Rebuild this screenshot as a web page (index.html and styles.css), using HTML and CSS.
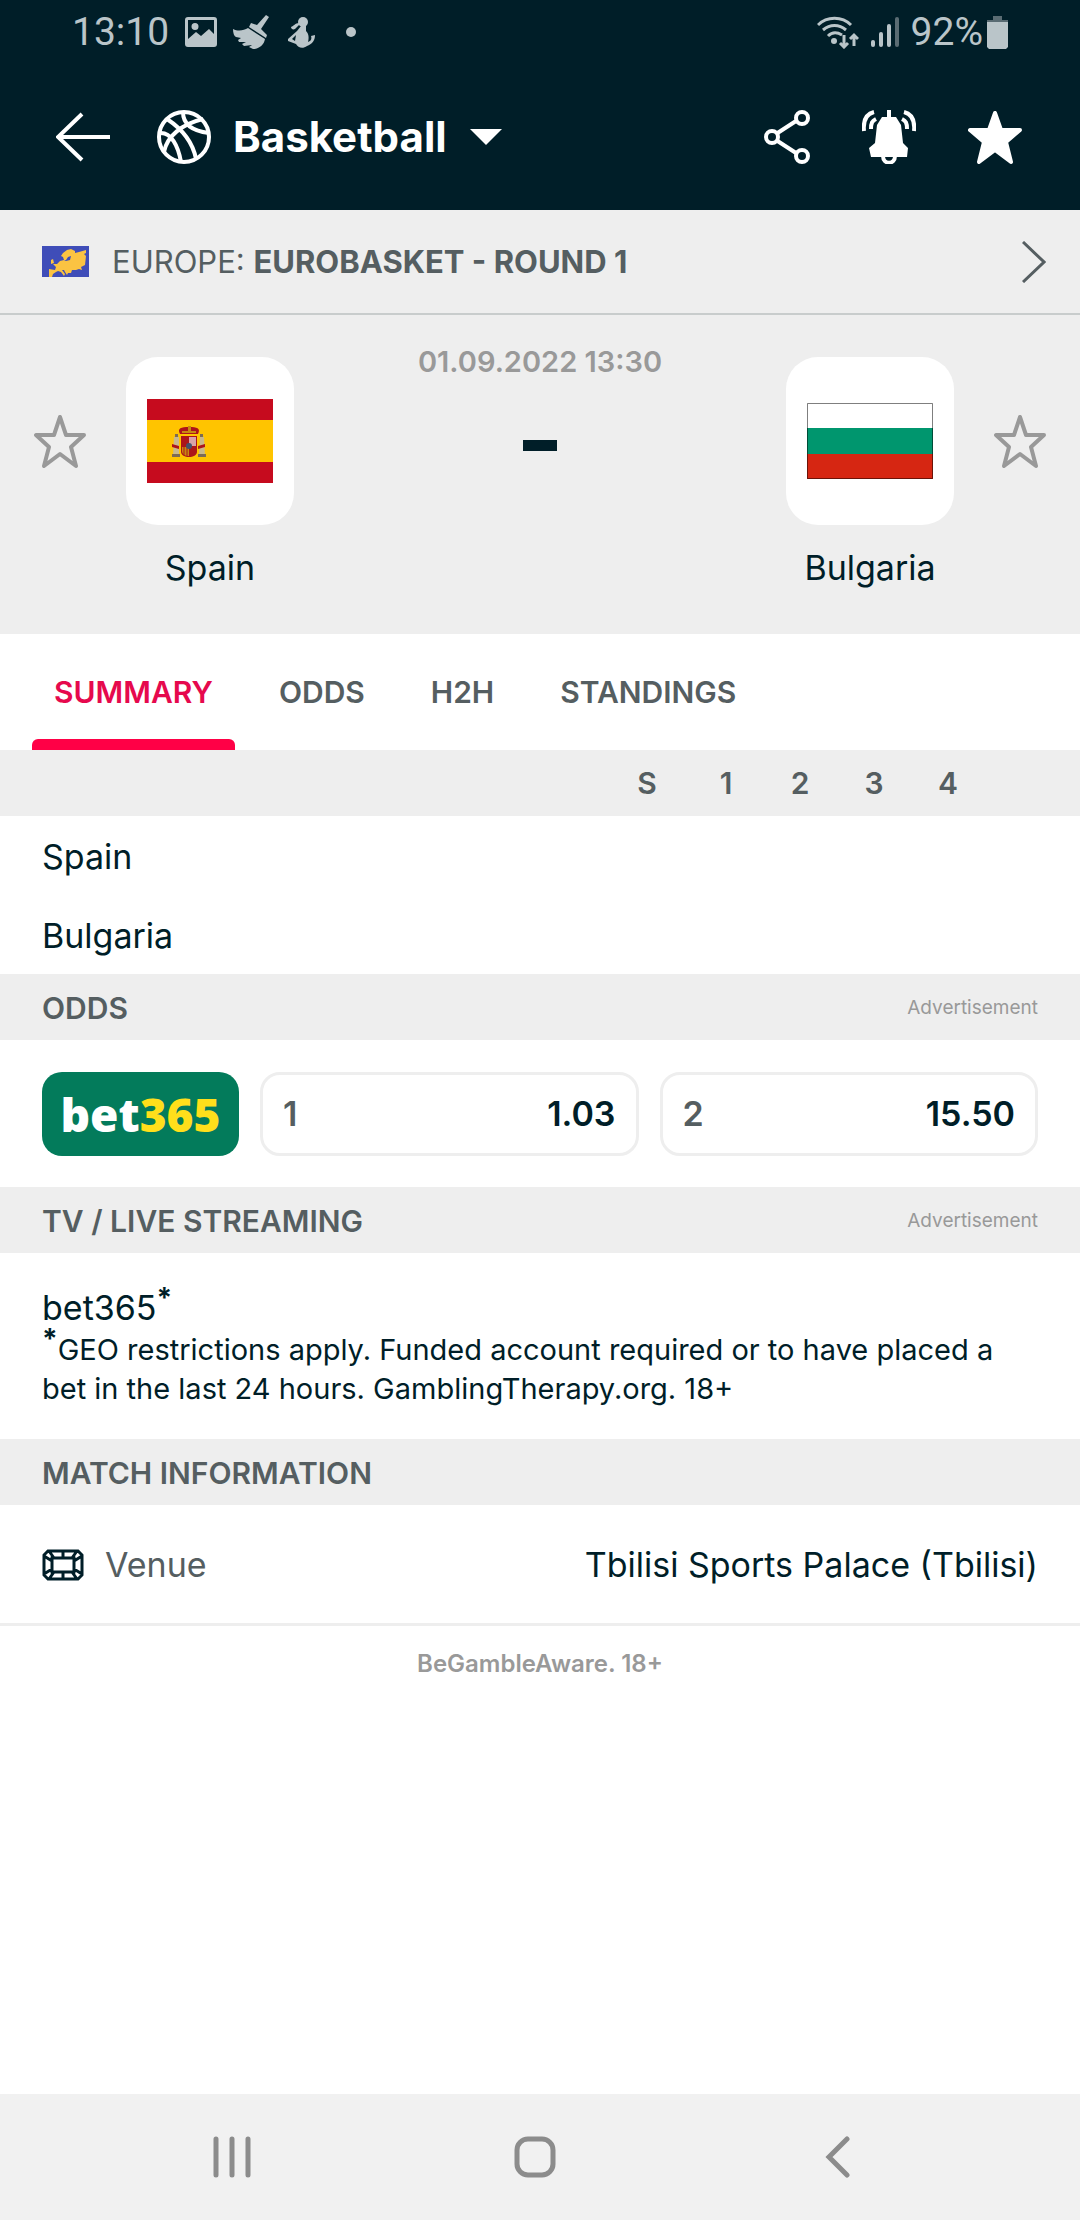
FILE: index.html
```html
<!DOCTYPE html>
<html lang="en">
<head>
  <meta charset="UTF-8">
  <meta name="viewport" content="width=device-width, initial-scale=1.0">
  <title>Spain - Bulgaria | Basketball</title>
  <link rel="stylesheet" href="styles.css">
</head>
<body>
  <div class="status">
    <span>13:10</span>
    <svg class="status-image" width="32" height="30" viewBox="0 0 32 30"><path fill-rule="evenodd" d="M3 0h26a3 3 0 0 1 3 3v24a3 3 0 0 1-3 3H3a3 3 0 0 1-3-3V3a3 3 0 0 1 3-3zM3 3v19l8-7 5 4 8-7 5 5V3zM10 6a3 3 0 1 1 0 7 3 3 0 0 1 0-7z"/></svg>
    <svg class="status-broom" width="36" height="34" viewBox="0 0 36 34"><path d="M33 0l3 2-8 12 6 6-1 3-17-11 2-4 6 2zM15 13l17 11c-1 6-6 10-12 10l-4-2 3-2-8 1-2-2 4-2-7 0-1-2 3-2-5-1C1 21 0 18 0 14c6 3 11 1 15-1z"/></svg>
    <svg class="status-person" width="27" height="31" viewBox="0 0 27 31"><circle cx="15" cy="5" r="5"/><path d="M11 6c-4 0-5 3-8 4 0 3 4 3 5 1l3-3zM13 9h5v5c3 3 3 7 2 11 3-1 4-3 3-6l4-1c0 6-3 9-8 11-4 3-9 2-11-2l-8-3v-2l9-8zm-5 9l-4 4 3 2z"/></svg>
    <svg width="10" height="10" viewBox="0 0 10 10"><circle cx="5" cy="5" r="5"/></svg>
    <div class="status-right">
      <svg width="42" height="33" viewBox="0 0 42 33"><g fill="none" stroke="#bac5c9" stroke-width="3"><path d="M1 9c9-9 24-9 33 0M6 14c7-6 16-6 23 0M11 20c4-4 9-4 14-1M27 19v12M23 27l4 4 4-4M37 30V19M33 23l4-4 4 4"/></g><circle cx="17" cy="25" r="3"/></svg>
      <svg width="28" height="30" viewBox="0 0 28 30"><rect y="23" width="4" height="7" rx="2"/><rect x="8" y="15" width="4" height="15" rx="2"/><rect x="16" y="7" width="4" height="23" rx="2"/><rect class="dim" x="24" width="4" height="30" rx="2"/></svg>
      <span>92%</span>
      <svg width="21" height="33" viewBox="0 0 21 33"><path class="dim" d="M6 0h9v4h6v3H0V4h6z"/><path d="M0 6h21v25l-2 2H2l-2-2z"/></svg>
    </div>
  </div>

  <header class="topbar">
    <button type="button" aria-label="Back">
      <svg width="54" height="50" viewBox="0 0 54 50"><path class="line" d="M26 2L2 25l24 23M2 25h52"/></svg>
    </button>
    <svg class="ball" width="54" height="54" viewBox="0 0 54 54"><g class="line"><circle cx="27" cy="27" r="25"/><path d="M10 9c15 10 26 24 29 40M4 23c10 0 17 12 20 29M7 42c3-16 18-28 39-33M26 2c0 12 9 19 26 21"/></g></svg>
    <select aria-label="Sport"><option>Basketball</option></select>
    <svg width="32" height="16" viewBox="0 0 32 16"><path fill="#fff" d="M0 0h32L16 16z"/></svg>
    <div class="actions">
      <button type="button" aria-label="Share">
        <svg width="46" height="54" viewBox="0 0 46 54"><g class="line"><path d="M12 24l20-13M12 30l20 13"/><circle cx="8" cy="27" r="6"/><circle cx="38" cy="8" r="6"/><circle cx="38" cy="46" r="6"/></g></svg>
      </button>
      <button type="button" aria-label="Notifications">
        <svg width="54" height="54" viewBox="0 0 54 54"><path fill="#fff" d="M25 0h4v7h5l5 8 2 18 5 5-1 9H9l-2-9 6-5 2-18 5-8h5z"/><path class="line" d="M21 46c0 9 12 9 12 0M2 21C1 11 4 4 12 2M9 19c0-6 1-8 5-10M52 21C53 11 50 4 42 2M45 19c0-6-1-8-5-10"/></svg>
      </button>
      <button type="button" aria-label="Favourite">
        <svg width="54" height="54" viewBox="0 0 54 54"><path fill="#fff" stroke="#fff" stroke-width="4" stroke-linejoin="round" d="M27 3l6 17h19L38 32l5 20-16-12-16 12 5-20L2 20h19z"/></svg>
      </button>
    </div>
  </header>

  <a class="league" href="#">
    <svg width="47" height="31" viewBox="0 0 47 31"><path fill="#3f4db8" d="M0 0h47v31H0z"/><path fill="#fbc342" d="M7 27l0-4 6 1 1-3-3-3 4 0 3-3 4-1 2 1 4-1 1-4-3 1-2 3-2 0-1-3-2-1 2-3 4-3 4-1 4 2 0 2 4-1 7-2 0 3-2 1 2 2-1 9-4 2 1 3-3-1-3 1-4 0-1 3-3 0-1 2-2-3-1-2-2 0 3 4-1 2-3-4-3-1-2 1-3 2-1 3-3 1zM9 14l2-1 1 4-3 1z"/></svg>
    <span>EUROPE: <strong>EUROBASKET - ROUND 1</strong></span>
    <svg class="chevron" width="24" height="42" viewBox="0 0 24 42"><path d="M1 1l21 20L1 41"/></svg>
  </a>

  <section class="match">
    <button type="button" class="fav" aria-label="Follow Spain">
      <svg width="52" height="54" viewBox="0 0 52 54"><path d="M26 3l6 18h18L37 33l5 19-16-12-16 12 5-19L2 21h18z"/></svg>
    </button>
    <div class="team">
      <div class="logo">
        <svg width="126" height="84" viewBox="0 0 126 84"><path fill="#c60b1e" d="M0 0h126v84H0z"/><path fill="#ffc400" d="M0 21h126v42H0z"/><path fill="#c9b98c" d="M27 38h5v19h-6zM53 38h4l1 19h-6z"/><path fill="#ad1519" d="M33 35c-3-6 1-7 9-7s12 1 9 7zM25 45l7 2v3l-7-2zM58 45l-7 2v3l7-2zM34 37h16v16c0 3-4 5-8 5s-8-2-8-5z"/><path fill="#d9a3a8" d="M42 38h7v9h-7z"/><path fill="#c78a10" d="M35 48h7v9c-4 0-7-2-7-5zM35 32h14v2H35zM41 27h3v7h-3z"/><path stroke="#ad1519" stroke-width="1" d="M37 48v8M40 48v9"/><path fill="#7d6b54" d="M25 55h8v3h-8zM51 55h8v3h-8zM28 35h3v3h-3zM53 35h3v3h-3z"/><circle cx="42" cy="47" r="3" fill="#44506e"/></svg>
      </div>
      <div class="name">Spain</div>
    </div>
    <div class="score">
      <time datetime="2022-09-01T13:30">01.09.2022 13:30</time>
      <div class="dash"></div>
    </div>
    <div class="team">
      <div class="logo">
        <svg width="126" height="76" viewBox="0 0 126 76"><path fill="#fff" d="M0 0h126v76H0z"/><path fill="#00966e" d="M0 25h126v26H0z"/><path fill="#d62612" d="M0 51h126v25H0z"/><path fill="none" stroke="#000" stroke-opacity="0.5" d="M.5.5h125v75H.5z"/></svg>
      </div>
      <div class="name">Bulgaria</div>
    </div>
    <button type="button" class="fav" aria-label="Follow Bulgaria">
      <svg width="52" height="54" viewBox="0 0 52 54"><path d="M26 3l6 18h18L37 33l5 19-16-12-16 12 5-19L2 21h18z"/></svg>
    </button>
  </section>

  <nav class="tabs">
    <a class="active" href="#">SUMMARY</a>
    <a href="#">ODDS</a>
    <a href="#">H2H</a>
    <a href="#">STANDINGS</a>
  </nav>

  <main>
    <table class="periods">
      <thead>
        <tr><td></td><th class="total">S</th><th>1</th><th>2</th><th>3</th><th class="last">4</th></tr>
      </thead>
      <tbody>
        <tr><th scope="row">Spain</th><td></td><td></td><td></td><td></td><td></td></tr>
        <tr><th scope="row">Bulgaria</th><td></td><td></td><td></td><td></td><td></td></tr>
      </tbody>
    </table>

    <div class="heading"><h2>ODDS</h2><small>Advertisement</small></div>
    <div class="odds">
      <a class="bookmaker" href="#">bet<span>365</span></a>
      <button type="button" class="odd"><span>1</span><b>1.03</b></button>
      <button type="button" class="odd"><span>2</span><b>15.50</b></button>
    </div>

    <div class="heading"><h2>TV / LIVE STREAMING</h2><small>Advertisement</small></div>
    <div class="stream">
      <a href="#">bet365<sup>*</sup></a>
      <p><sup>*</sup>GEO restrictions apply. Funded account required or to have placed a bet in the last 24 hours. GamblingTherapy.org. 18+</p>
    </div>

    <div class="heading"><h2>MATCH INFORMATION</h2></div>
    <div class="venue">
      <svg width="42" height="32" viewBox="0 0 42 32"><path fill="none" stroke="#001e28" stroke-width="3" d="M6 2h30l4 4v20l-4 4H6l-4-4V6zM10 9h22v14H10zM2 7l8 5M7 2l5 7M40 7l-8 5M35 2l-5 7M2 25l8-5M7 30l5-7M40 25l-8-5M35 30l-5-7M21 2v7M21 23v7"/></svg>
      <span class="label">Venue</span>
      <span class="place">Tbilisi Sports Palace (Tbilisi)</span>
    </div>
    <p class="aware">BeGambleAware. 18+</p>
  </main>

  <div class="navbar">
    <button type="button" aria-label="Recent apps">
      <svg width="42" height="42" viewBox="0 0 42 42"><path d="M5 3v36M21 3v36M37 3v36"/></svg>
    </button>
    <button type="button" aria-label="Home">
      <svg width="42" height="42" viewBox="0 0 42 42"><rect x="3" y="3" width="36" height="36" rx="11"/></svg>
    </button>
    <button type="button" aria-label="Back">
      <svg width="42" height="42" viewBox="0 0 42 42"><path d="M30 3L12 21l18 18"/></svg>
    </button>
  </div>
</body>
</html>
```

FILE: styles.css
```css
* {
  box-sizing: border-box;
}
body {
  margin: 0;
  min-height: 100vh;
  display: flex;
  flex-direction: column;
  font-family: Inter, "Liberation Sans", sans-serif;
  font-size: 34px;
  line-height: 44px;
  color: #001e28;
  background: #fff;
}
svg {
  display: block;
  flex: none;
}
button, select {
  border: 0;
  padding: 0;
  margin: 0;
  background: none;
  font: inherit;
  color: inherit;
}
a {
  color: inherit;
  text-decoration: none;
}
h2, p {
  margin: 0;
}

/* phone status bar */
.status {
  display: flex;
  align-items: center;
  height: 64px;
  padding: 0 72px;
  background: #001e28;
  color: #bac5c9;
  fill: #bac5c9;
  font-family: Roboto, sans-serif;
  font-size: 39px;
}
.status .dim {
  fill: #5a6c73;
}
.status-image {
  margin-left: 16px;
}
.status-broom {
  margin-left: 16px;
}
.status-person {
  margin: 0 31px 0 19px;
}
.status-right {
  margin-left: auto;
  display: flex;
  align-items: center;
  gap: 12px;
}
.status-right span {
  margin-right: -8px;
}

.topbar {
  display: flex;
  align-items: center;
  height: 146px;
  padding: 0 58px 0 56px;
  background: #001e28;
  color: #fff;
}
.topbar .line {
  fill: none;
  stroke: #fff;
  stroke-width: 4;
}
.ball {
  margin: 0 22px 0 47px;
}
select {
  appearance: none;
  margin-right: 23px;
  font-size: 42px;
  font-weight: 700;
}
.actions {
  margin-left: auto;
  display: flex;
  gap: 52px;
}

.league {
  display: flex;
  align-items: center;
  height: 105px;
  padding: 0 34px 0 42px;
  border-bottom: 2px solid #c8cccc;
  background: #eee;
  color: #555e61;
  font-size: 31px;
}
.league span {
  margin-left: 23px;
}
.league strong {
  font-weight: 700;
}
.chevron {
  margin-left: auto;
  fill: none;
  stroke: #555e61;
  stroke-width: 3;
}

.match {
  display: flex;
  padding: 23px 34px 44px;
  background: #eee;
}
.fav {
  height: 168px;
  margin-top: 19px;
}
.fav path {
  fill: none;
  stroke: #999;
  stroke-width: 4;
  stroke-linejoin: round;
}
.team {
  width: 168px;
  margin: 19px 40px 0;
  text-align: center;
}
.logo {
  display: flex;
  align-items: center;
  justify-content: center;
  height: 168px;
  border-radius: 32px;
  background: #fff;
}
.name {
  margin-top: 21px;
}
.score {
  flex: 1;
  text-align: center;
  white-space: nowrap;
}
.score time {
  color: #999;
  font-size: 29px;
  font-weight: 600;
}
.dash {
  width: 34px;
  height: 11px;
  margin: 56px auto 0;
  background: #001e28;
}

.tabs {
  display: flex;
  gap: 22px;
  height: 116px;
  padding-left: 32px;
  color: #555e61;
  font-size: 30px;
  font-weight: 600;
}
.tabs a {
  display: flex;
  flex-direction: column;
  justify-content: space-between;
  padding: 36px 22px 0;
}
.tabs .active {
  color: #e6094d;
}
.tabs .active::after {
  content: "";
  height: 11px;
  margin: 0 -22px;
  border-radius: 6px 6px 0 0;
  background: #ff0046;
}

main {
  flex: 1;
}
.periods {
  width: 100%;
  table-layout: fixed;
  border-collapse: collapse;
}
.periods th, .periods td {
  padding: 0;
}
.periods thead {
  background: #eee;
  color: #555e61;
  font-size: 30px;
}
.periods thead th {
  width: 74px;
  height: 66px;
  font-weight: 600;
}
.periods thead .total {
  width: 84px;
}
.periods thead .last {
  width: 169px;
  padding-right: 95px;
}
.periods tbody th {
  height: 79px;
  padding: 3px 0 0 42px;
  font-weight: 400;
  text-align: left;
}

.heading {
  display: flex;
  align-items: center;
  justify-content: space-between;
  height: 66px;
  padding: 2px 42px 0;
  background: #eee;
  color: #555e61;
}
.heading h2 {
  font-size: 30px;
  font-weight: 600;
}
.heading small {
  color: #999;
  font-size: 19px;
}

.odds {
  display: flex;
  gap: 21px;
  padding: 32px 42px 31px;
}
.bookmaker {
  width: 197px;
  border-radius: 20px;
  background: #037b5b;
  color: #fff;
  font-family: "Open Sans", sans-serif;
  font-size: 46px;
  font-weight: 800;
  line-height: 84px;
  text-align: center;
}
.bookmaker span {
  color: #ffdf1b;
}
.odd {
  flex: 1;
  display: flex;
  align-items: center;
  justify-content: space-between;
  height: 84px;
  padding: 0 20px;
  border: 3px solid #eee;
  border-radius: 20px;
  font-weight: 600;
}
.odd span {
  color: #555e61;
}
.odd b {
  font-weight: 600;
}

.stream {
  padding: 33px 42px 31px;
}
.stream sup {
  font-size: 28px;
  font-weight: 700;
  line-height: 0;
}
.stream p {
  font-size: 29px;
  line-height: 39px;
}

.venue {
  display: flex;
  align-items: center;
  height: 121px;
  padding: 2px 42px 0;
  border-bottom: 3px solid #eee;
}
.venue .label {
  margin-left: 21px;
  color: #555e61;
}
.venue .place {
  margin-left: auto;
}
.aware {
  padding-top: 16px;
  color: #999;
  font-size: 24px;
  font-weight: 600;
  text-align: center;
}

/* system navigation */
.navbar {
  display: flex;
  align-items: center;
  justify-content: space-around;
  height: 126px;
  padding: 0 90px 0 80px;
  background: #f1f1f1;
}
.navbar svg {
  fill: none;
  stroke: #8c8c8c;
  stroke-width: 5;
  stroke-linecap: round;
}
```
